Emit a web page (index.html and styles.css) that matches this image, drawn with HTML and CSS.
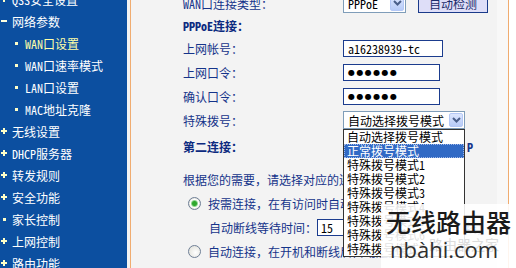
FILE: index.html
```html
<!DOCTYPE html>
<html lang="zh-CN">
<head>
    <meta charset="UTF-8">
    <meta name="viewport" content="width=device-width, initial-scale=1.0">
    <title>WAN口设置</title>
    <link rel="stylesheet" href="styles.css">
</head>
<body>
    <div class="page">
        <ul class="menu">
            <li class="grp"><i class="plus"></i>QSS安全设置</li>
            <li class="grp"><i class="minus"></i>网络参数</li>
            <li class="sub on"><i class="dot"></i>WAN口设置</li>
            <li class="sub"><i class="dot"></i>WAN口速率模式</li>
            <li class="sub"><i class="dot"></i>LAN口设置</li>
            <li class="sub"><i class="dot"></i>MAC地址克隆</li>
            <li class="grp"><i class="plus"></i>无线设置</li>
            <li class="grp"><i class="plus"></i>DHCP服务器</li>
            <li class="grp"><i class="plus"></i>转发规则</li>
            <li class="grp"><i class="plus"></i>安全功能</li>
            <li class="grp"><i class="dot"></i>家长控制</li>
            <li class="grp"><i class="plus"></i>上网控制</li>
            <li class="grp"><i class="plus"></i>路由功能</li>
        </ul>

        <div class="content">
            <div class="form">
                <div class="row">
                    <span class="label">WAN口连接类型：</span>
                    <span class="select short">PPPoE
                        <b class="arrow"><svg width="9" height="6" viewBox="0 0 9 6"><path d="M1 1l3.5 3.5L8 1" stroke="#4a5f8a" stroke-width="2" fill="none"/></svg></b>
                    </span>
                    <span class="btn">自动检测</span>
                </div>
                <div class="row head">
                    <span class="label bold">PPPoE连接：</span>
                </div>
                <div class="row">
                    <span class="label">上网帐号：</span>
                    <span class="input user">a16238939-tc</span>
                </div>
                <div class="row">
                    <span class="label">上网口令：</span>
                    <span class="input pass"><span class="dots">●●●●●●</span></span>
                </div>
                <div class="row">
                    <span class="label">确认口令：</span>
                    <span class="input pass"><span class="dots">●●●●●●</span></span>
                </div>
                <div class="row">
                    <span class="label">特殊拨号：</span>
                    <span class="select wide">自动选择拨号模式
                        <b class="arrow"><svg width="9" height="6" viewBox="0 0 9 6"><path d="M1 1l3.5 3.5L8 1" stroke="#4a5f8a" stroke-width="2" fill="none"/></svg></b>
                        <ul class="list">
                            <li>自动选择拨号模式</li>
                            <li class="sel">正常拨号模式</li>
                            <li>特殊拨号模式1</li>
                            <li>特殊拨号模式2</li>
                            <li>特殊拨号模式3</li>
                            <li>特殊拨号模式4</li>
                            <li>特殊拨号模式5</li>
                            <li>特殊拨号模式6</li>
                            <li>特殊拨号模式7</li>
                        </ul>
                    </span>
                </div>
                <div class="row second">
                    <span class="label bold">第二连接：</span>
                    <span class="tail">P</span>
                </div>
                <div class="row note">根据您的需要，请选择对应的连接模式：</div>
                <div class="row opt">
                    <span class="radio on"></span>按需连接，在有访问时自动连接
                </div>
                <div class="row wait">
                    自动断线等待时间：<span class="input num">15</span> 分 (0 表示不自动断线)
                </div>
                <div class="row opt">
                    <span class="radio"></span>自动连接，在开机和断线后自动连接
                </div>
            </div>
        </div>
        <div class="edge"></div>
    </div>

    <div class="mark">
        <span class="faint">路由器之家</span>
        <span class="cn">无线路由器</span>
        <span class="en">nbàhi.com</span>
    </div>
</body>
</html>
```

FILE: styles.css
```css
body {
    margin: 0;
    font-family: "Noto Sans Mono CJK SC", "Noto Sans CJK SC", sans-serif;
    font-size: 12px;
    background: #fff;
}
.page {
    display: flex;
    height: 268px;
    overflow: hidden;
    background: #f3f3f3;
}

/* left menu */
.menu {
    flex: none;
    width: 127px;
    margin: 0;
    padding: 0;
    list-style: none;
    background: #0c4fa0;
    color: #fff;
}
.menu li {
    display: flex;
    align-items: center;
    height: 22px;
    white-space: nowrap;
}
.menu li:first-child {
    margin-top: -12px;
}
.menu i {
    display: block;
    flex: none;
}
.plus {
    width: 6px;
    height: 6px;
    margin: 0 5px 0 1px;
    background: linear-gradient(#ffffc8, #ffffc8) center / 6px 2px no-repeat,
                linear-gradient(#ffffc8, #ffffc8) center / 2px 6px no-repeat;
}
.minus {
    width: 6px;
    height: 6px;
    margin: 0 5px 0 1px;
    background: linear-gradient(#ffffe0, #ffffe0) center / 6px 2px no-repeat;
}
.dot {
    width: 3px;
    height: 3px;
    margin-right: 7px;
    background: #ffffc8;
}
.sub {
    padding-left: 15px;
}
.grp .dot {
    margin: 0 6px 0 3px;
}
.menu .on {
    color: #ffffa8;
}

/* content */
.content {
    flex: none;
    width: 377px;
    margin-left: 3px;
    border-left: 1px solid #f0ac70;
    border-right: 1px solid #f0ac70;
    background: linear-gradient(to right, #f3f3f3 366px, #f8f8f8 366px);
    color: #15348a;
}
.edge {
    flex: 1;
    background: #fff;
}
.form {
    margin-top: -9px;
}
.row {
    display: flex;
    align-items: center;
    height: 24px;
    padding-left: 52px;
    white-space: nowrap;
}
.row.head {
    height: 21px;
}
.row.second {
    height: 28px;
}
.row.note {
    margin-top: 7px;
}
.row.opt {
    padding-left: 57px;
}
.row.wait {
    padding-left: 78px;
}
.label {
    flex: none;
    width: 160px;
}
.bold {
    font-weight: bold;
    color: #0c2a80;
}
.tail {
    margin-left: 124px;
    font-weight: bold;
}

/* controls */
.select {
    position: relative;
    box-sizing: border-box;
    display: flex;
    align-items: center;
    height: 19px;
    padding-left: 4px;
    border: 1px solid #7f9db9;
    background: #fff;
    color: #000;
}
.select.short {
    width: 63px;
}
.select.wide {
    width: 122px;
    height: 18px;
    z-index: 2;
}
.arrow {
    position: absolute;
    right: 1px;
    top: 1px;
    bottom: 1px;
    width: 14px;
    display: flex;
    align-items: center;
    justify-content: center;
    box-sizing: border-box;
    border: 1px solid #b4c8f6;
    border-radius: 2px;
    background: linear-gradient(#dce6fe, #b7cbf8);
}
.btn {
    box-sizing: border-box;
    width: 70px;
    height: 19px;
    margin-left: 12px;
    border: 1px solid #1a3a8a;
    background: #dedef8;
    color: #1a2a6a;
    text-align: center;
    line-height: 17px;
}
.input {
    box-sizing: border-box;
    display: flex;
    align-items: center;
    height: 17px;
    padding-left: 4px;
    border: 1px solid #1b3c8e;
    background: #fff;
    color: #000;
}
.input.user {
    width: 100px;
}
.input.pass {
    width: 97px;
}
.input.num {
    width: 40px;
    padding-left: 3px;
}
.dots {
    font-family: "DejaVu Sans", sans-serif;
    font-size: 8px;
    letter-spacing: 1.4px;
}
.radio {
    box-sizing: border-box;
    flex: none;
    width: 13px;
    height: 13px;
    margin-right: 7px;
    border: 1px solid #6f7f96;
    border-radius: 50%;
    background: radial-gradient(circle at 60% 60%, #ffffff, #dcdcd4);
}
.radio.on {
    background: radial-gradient(circle, #2ea82e 0 2px, #8fd68f 3px, #ffffff 4px, #dcdcd4 6px);
}

/* dropdown list */
.list {
    position: absolute;
    left: -1px;
    top: calc(100% + 1px);
    width: 122px;
    box-sizing: border-box;
    margin: 0;
    padding: 0;
    list-style: none;
    border: 1px solid #333;
    background: #fff;
    color: #000;
}
.list li {
    height: 14px;
    line-height: 14px;
    padding-left: 3px;
}
.list .sel {
    background: #316ac5;
    color: #fff;
    outline: 1px dotted #a0b8e8;
    outline-offset: -1px;
}

/* watermark */
.mark {
    position: absolute;
    right: 0;
    top: 204px;
    width: 135px;
    height: 64px;
    box-sizing: border-box;
    padding: 2px 0 0 5px;
    display: flex;
    flex-direction: column;
    background: rgba(255, 255, 255, 0.88);
    z-index: 5;
}
.mark .cn {
    position: relative;
    font-family: "Noto Sans CJK SC", sans-serif;
    font-size: 25px;
    line-height: 30px;
    font-weight: 500;
    color: #1a1a1a;
}
.mark .en {
    position: relative;
    margin-left: 4px;
    font-family: "Open Sans", sans-serif;
    font-size: 22px;
    line-height: 26px;
    color: #2e2e2e;
}
.mark .faint {
    position: absolute;
    left: 48px;
    top: 30px;
    font-family: "Noto Sans CJK SC", sans-serif;
    font-size: 14px;
    color: #dcdcdc;
}
```
